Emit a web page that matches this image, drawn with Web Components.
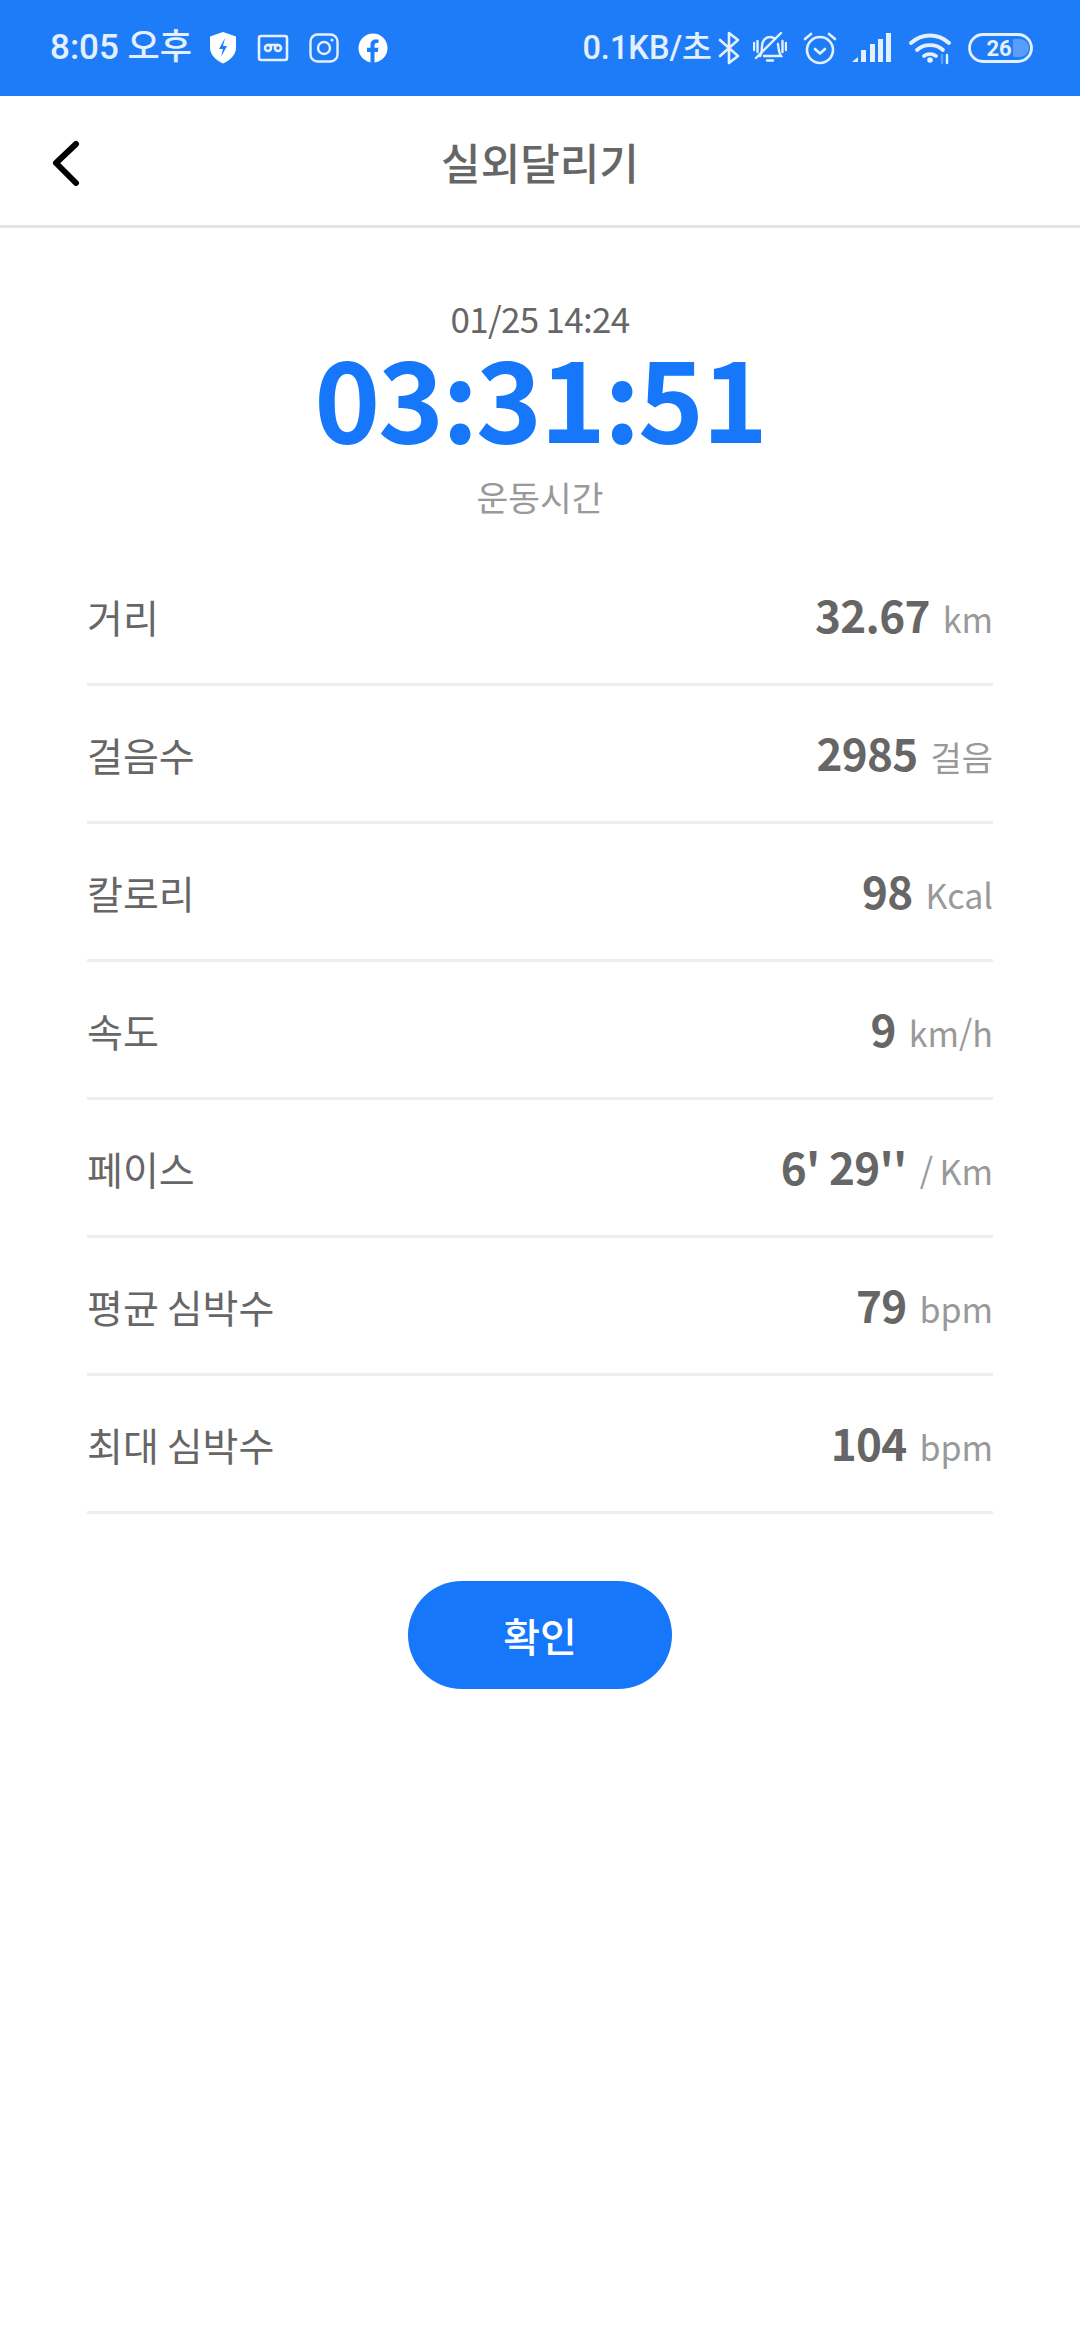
<!DOCTYPE html>
<html lang="ko">
<head>
<meta charset="utf-8">
<title>실외달리기</title>
<style>
  html, body { margin: 0; background: #fff; }
  body { width: 1080px; height: 2340px; overflow: hidden; font-family: "Noto Sans CJK KR", "Noto Sans", sans-serif; }
</style>
</head>
<body>
<status-bar></status-bar>
<app-header>실외달리기</app-header>
<workout-summary date="01/25 14:24" time="03:31:51" label="운동시간"></workout-summary>
<stat-list>
  <stat-row label="거리" value="32.67" unit="km"></stat-row>
  <stat-row label="걸음수" value="2985" unit="걸음"></stat-row>
  <stat-row label="칼로리" value="98" unit="Kcal"></stat-row>
  <stat-row label="속도" value="9" unit="km/h"></stat-row>
  <stat-row label="페이스" value="6' 29''" unit="/ Km"></stat-row>
  <stat-row label="평균 심박수" value="79" unit="bpm"></stat-row>
  <stat-row label="최대 심박수" value="104" unit="bpm"></stat-row>
</stat-list>
<confirm-button>확인</confirm-button>

<script>
class StatusBar extends HTMLElement {
  constructor() {
    super();
    this.attachShadow({ mode: 'open' });
    this.shadowRoot.innerHTML = `
      <style>
        :host { display: flex; align-items: center; height: 96px; background: #1f7cf9; color: #e4f0fe; padding: 0 46px 0 50px; font-family: Roboto, "Noto Sans CJK KR", sans-serif; font-weight: 500; }
        svg { display: block; flex: none; }
        .left, .right { display: flex; align-items: center; }
        .right { margin-left: auto; }
        .time { width: 141px; white-space: nowrap; font-size: 35px; line-height: 40px; }
        .speed { white-space: nowrap; font-size: 32.500px; line-height: 40px; }
      </style>
      <div class="left">
        <span class="time">8:05 오후</span>
        <svg style="margin-left:18px" width="28" height="34" viewBox="0 0 28 34"><path d="M14 1l13 4.500v11c0 7.500-6 12.800-13 16-7-3.200-13-8.500-13-16v-11z" fill="#fff"/><path d="M16 7l-6 11h4l-2 8 6-11h-4z" fill="#1f7cf9"/></svg>
        <svg style="margin-left:20px" width="32" height="28" viewBox="0 0 32 28" fill="none" stroke="#e4f0fe" stroke-width="2.600"><rect x="2" y="2" width="28" height="24" rx="2"/><circle cx="11" cy="14" r="3"/><circle cx="21" cy="14" r="3"/><path d="M11 11h10"/></svg>
        <svg style="margin-left:20px" width="30" height="30" viewBox="0 0 30 30" fill="none" stroke="#e4f0fe" stroke-width="2.400"><rect x="1.500" y="1.500" width="27" height="27" rx="7"/><circle cx="15" cy="15" r="6"/><circle cx="23" cy="7" r="1.500" fill="#e4f0fe" stroke="none"/></svg>
        <svg style="margin-left:19px" width="30" height="30" viewBox="0 0 30 30"><circle cx="15" cy="15" r="14.500" fill="#fff"/><path d="M12.500 30V19H9v-4.200h3.500v-3c0-3.500 2-5.400 5.200-5.400 1.500 0 2.800.2 2.800.2v3.500h-1.700c-1.700 0-2.300 1-2.300 2.200v2.500h3.900l-.6 4.200h-3.300v11z" fill="#1f7cf9"/></svg>
      </div>
      <div class="right">
        <span class="speed">0.1KB/초</span>
        <svg style="margin-left:6px" width="22" height="34" viewBox="0 0 22 34" fill="none" stroke="#e4f0fe" stroke-width="2.600" stroke-linejoin="round" stroke-linecap="round"><path d="M2 9l18 16-9 7V2l9 7L2 25"/></svg>
        <svg style="margin-left:13px" width="34" height="34" viewBox="0 0 34 34" fill="none" stroke="#e4f0fe" stroke-width="2.400" stroke-linecap="round"><path d="M7 25c2-3 2-6 2-10 0-5 3.500-9 8-9 2 0 3.500.6 5 1.800M25 13c.5 4 .5 8 3 12H11"/><path d="M14 29.500h6"/><path d="M3 27L28 2"/><path d="M1 12v7M4.500 10v11M29.500 10v11M33 12v7"/></svg>
        <svg style="margin-left:16px" width="34" height="34" viewBox="0 0 34 34" fill="none" stroke="#e4f0fe" stroke-width="2.600" stroke-linecap="round" stroke-linejoin="round"><circle cx="17" cy="19" r="13"/><path d="M12 18l5 4.500 5-4.500"/><path d="M2 8l6-5M32 8l-6-5"/></svg>
        <svg style="margin-left:15px" width="40" height="30" viewBox="0 0 40 30" fill="#e4f0fe"><path d="M0 29l6-5v5z"/><rect x="9" y="17" width="5" height="12"/><rect x="18" y="11" width="5" height="18"/><rect x="26" y="6" width="5" height="23"/><rect x="34" y="0" width="5" height="29"/></svg>
        <svg style="margin-left:17px" width="42" height="34" viewBox="0 0 42 34" fill="none" stroke="#e4f0fe" stroke-width="3.800" stroke-linecap="round"><path d="M2 12c11-10 27-10 38 0"/><path d="M8 19c7-6.500 19-6.500 26 0"/><path d="M15 25c3.500-2.500 8.500-2.500 12 0"/><circle cx="21" cy="29" r="2.800" fill="#e4f0fe" stroke="none"/><path d="M33 24v8" stroke="#5d9ffb" stroke-width="2.400"/><path d="M38 24v8" stroke-width="2.400"/></svg>
        <svg style="margin-left:17px" width="66" height="30" viewBox="0 0 66 30"><rect x="1.500" y="1.500" width="62" height="27" rx="13.500" fill="none" stroke="#e4f0fe" stroke-width="2.800"/><path d="M45 6h7a9 9 0 0 1 0 18h-7z" fill="#5a9efb"/><text x="31" y="23" text-anchor="middle" font-family="Roboto, sans-serif" font-size="22" font-weight="700" fill="#e4f0fe">26</text></svg>
      </div>
    `;
  }
}

class AppHeader extends HTMLElement {
  constructor() {
    super();
    this.attachShadow({ mode: 'open' });
    this.shadowRoot.innerHTML = `
      <style>
        :host { display: flex; align-items: center; justify-content: center; position: relative; height: 129px; border-bottom: 3px solid #e4e4e4; color: #666; font-size: 43px; font-weight: 500; }
        .back { position: absolute; left: 50px; top: 44px; display: block; }
      </style>
      <svg class="back" width="30" height="46" viewBox="0 0 30 46" fill="none" stroke="#000" stroke-width="6" stroke-linecap="round" stroke-linejoin="round"><path d="M26 4L6 23l20 20"/></svg>
      <slot></slot>
    `;
  }
}

class WorkoutSummary extends HTMLElement {
  constructor() {
    super();
    this.attachShadow({ mode: 'open' });
    this.shadowRoot.innerHTML = `
      <style>
        :host { display: flex; flex-direction: column; align-items: center; padding-top: 64px; }
        .date { color: #666; font-size: 35px; line-height: 52px; letter-spacing: -.7px; font-family: "Noto Sans CJK JP", sans-serif; }
        .time { color: #1677fb; font-size: 112px; line-height: 116px; font-weight: 700; letter-spacing: -2.200px; margin-top: -8px; font-family: "Noto Sans CJK JP", sans-serif; }
        .label { color: #999; font-size: 34.500px; line-height: 52px; margin-top: 18px; }
      </style>
      <div class="date" lang="en"></div>
      <div class="time" lang="en"></div>
      <div class="label"></div>
    `;
  }

  connectedCallback() {
    this.shadowRoot.querySelector('.date').textContent = this.getAttribute('date');
    this.shadowRoot.querySelector('.time').textContent = this.getAttribute('time');
    this.shadowRoot.querySelector('.label').textContent = this.getAttribute('label');
  }
}

class StatList extends HTMLElement {
  constructor() {
    super();
    this.attachShadow({ mode: 'open' });
    this.shadowRoot.innerHTML = `
      <style>
        :host { display: block; margin: 0 87px; padding-top: 26px; }
      </style>
      <slot></slot>
    `;
  }
}

class StatRow extends HTMLElement {
  constructor() {
    super();
    this.attachShadow({ mode: 'open' });
    this.shadowRoot.innerHTML = `
      <style>
        :host { display: flex; align-items: center; justify-content: space-between; height: 135px; border-bottom: 3px solid #eee; color: #666; white-space: nowrap; }
        .label { font-size: 39px; word-spacing: -3px; }
        .right { display: flex; align-items: baseline; padding-bottom: 4px; }
        .value { font-size: 44px; font-weight: 700; letter-spacing: -.7px; font-family: "Noto Sans CJK JP", sans-serif; }
        .unit { font-size: 34px; color: #999; margin-left: 13px; word-spacing: -3px; }
      </style>
      <span class="label"></span>
      <span class="right"><span class="value" lang="en"></span><span class="unit"></span></span>
    `;
  }

  connectedCallback() {
    this.shadowRoot.querySelector('.label').textContent = this.getAttribute('label');
    this.shadowRoot.querySelector('.value').textContent = this.getAttribute('value');
    this.shadowRoot.querySelector('.unit').textContent = this.getAttribute('unit');
  }
}

class ConfirmButton extends HTMLElement {
  constructor() {
    super();
    this.attachShadow({ mode: 'open' });
    this.shadowRoot.innerHTML = `
      <style>
        :host { display: flex; align-items: center; justify-content: center; width: 264px; height: 108px; margin: 67px auto 0; border-radius: 54px; background: #1677fb; color: #fff; font-size: 40px; font-weight: 500; }
      </style>
      <slot></slot>
    `;
  }
}

customElements.define('status-bar', StatusBar);
customElements.define('app-header', AppHeader);
customElements.define('workout-summary', WorkoutSummary);
customElements.define('stat-list', StatList);
customElements.define('stat-row', StatRow);
customElements.define('confirm-button', ConfirmButton);
</script>
</body>
</html>
